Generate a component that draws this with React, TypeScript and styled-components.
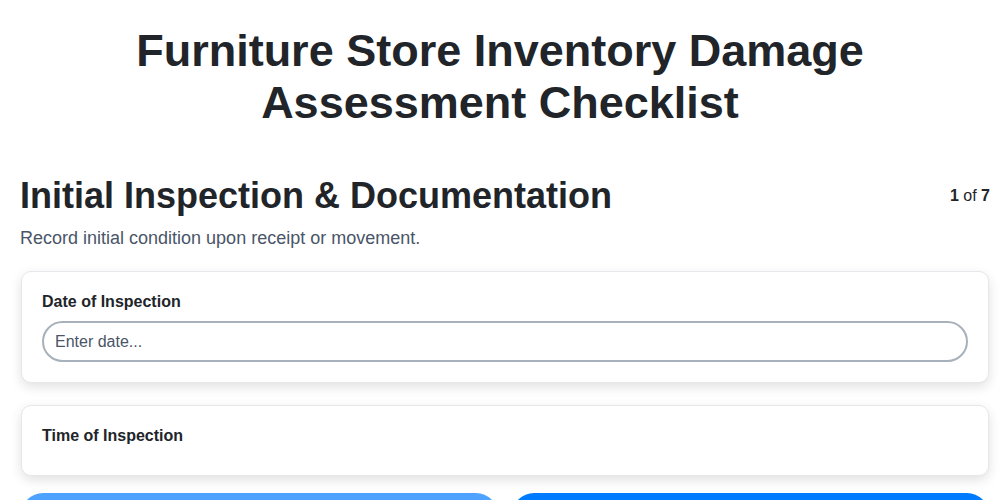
import styled, { createGlobalStyle } from "styled-components";

const GlobalStyle = createGlobalStyle`
  body {
    margin: 0;
    background: #ffffff;
    font-family: "Liberation Sans", Arial, sans-serif;
    color: #212529;
  }
`;

const Page = styled.div`
  padding: 25px 0 20px;
`;

const Title = styled.h1`
  margin: 0 0 45px;
  text-align: center;
  font-size: 45px;
  line-height: 52px;
  font-weight: 700;
  color: #212529;
`;

const Main = styled.main`
  padding: 0 10px 0 20px;
`;

const SectionHead = styled.div`
  display: flex;
  justify-content: space-between;
  align-items: center;
`;

const SectionTitle = styled.h2`
  margin: 0;
  font-size: 36px;
  line-height: 44px;
  font-weight: 700;
  color: #212529;
`;

const Counter = styled.span`
  font-size: 16px;
  color: #212529;

  b {
    font-weight: 700;
  }
`;

const Description = styled.p`
  margin: 8px 0 21px;
  font-size: 18px;
  line-height: 24px;
  color: #4a5568;
`;

const Fields = styled.div`
  display: flex;
  flex-direction: column;
  gap: 22px;
  padding: 0 1px;
`;

const Card = styled.div`
  padding: 20px;
  background: #fff;
  border: 1px solid #e5e7eb;
  border-radius: 10px;
  box-shadow: 0 4px 12px rgba(0, 0, 0, 0.12);
`;

const Label = styled.label`
  display: block;
  margin-bottom: 10px;
  font-size: 16px;
  line-height: 19px;
  font-weight: 700;
  color: #212529;
`;

const Input = styled.input`
  box-sizing: border-box;
  width: 100%;
  height: 41px;
  padding: 0 11px;
  border: 2px solid #a7b1bb;
  border-radius: 999px;
  font-family: "Liberation Sans", Arial, sans-serif;
  font-size: 16px;
  color: #212529;
  outline: none;

  &::placeholder {
    color: #4a5568;
  }
`;

const Nav = styled.div`
  display: grid;
  grid-template-columns: 1fr 1fr;
  gap: 14px;
  margin-top: 17px;
  padding: 0 1px;
`;

const NavButton = styled.button<{ $primary?: boolean }>`
  height: 44px;
  border: none;
  border-radius: 22px;
  background: ${(p) => (p.$primary ? "#007bff" : "#4da3ff")};
  color: #fff;
  font-family: "Liberation Sans", Arial, sans-serif;
  font-size: 16px;
  font-weight: 700;
`;

export default function App() {
  return (
    <>
      <GlobalStyle />
      <Page>
        <Title>
          Furniture Store Inventory Damage
          <br />
          Assessment Checklist
        </Title>
        <Main>
          <SectionHead>
            <SectionTitle>Initial Inspection &amp; Documentation</SectionTitle>
            <Counter>
              <b>1</b> of <b>7</b>
            </Counter>
          </SectionHead>
          <Description>Record initial condition upon receipt or movement.</Description>
          <Fields>
            <Card>
              <Label>Date of Inspection</Label>
              <Input placeholder="Enter date..." />
            </Card>
            <Card>
              <Label>Time of Inspection</Label>
            </Card>
          </Fields>
          <Nav>
            <NavButton>Previous</NavButton>
            <NavButton $primary>Next</NavButton>
          </Nav>
        </Main>
      </Page>
    </>
  );
}
